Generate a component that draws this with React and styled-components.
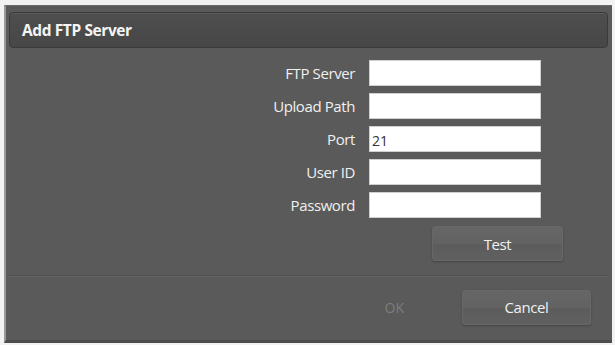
import React from "react"
import styled, { createGlobalStyle } from "styled-components"

const GlobalStyle = createGlobalStyle`
  html, body {
    margin: 0;
    padding: 0;
    background: #f2f2f2;
    font-family: "Open Sans", "Liberation Sans", sans-serif;
  }
`

const fields = [
  { key: "server", label: "FTP Server", value: "" },
  { key: "path", label: "Upload Path", value: "" },
  { key: "port", label: "Port", value: "21" },
  { key: "user", label: "User ID", value: "" },
  { key: "password", label: "Password", value: "" },
]

const App = () => {
  return (
    <>
      <GlobalStyle />
      <Page>
        <Dialog>
          <TitleBar>Add FTP Server</TitleBar>
          <Form>
            {fields.map(field => (
              <Row key={field.key}>
                <Label>{field.label}</Label>
                <Input
                  type={field.key === "password" ? "password" : "text"}
                  defaultValue={field.value}
                />
              </Row>
            ))}
            <TestRow>
              <Button $width={131}>Test</Button>
            </TestRow>
          </Form>
          <Footer>
            <OkText>OK</OkText>
            <Button $width={129}>Cancel</Button>
          </Footer>
        </Dialog>
      </Page>
    </>
  )
}

const Page = styled.div`
  width: 615px;
  height: 345px;
  padding: 5px 3px 2px 4px;
  box-sizing: border-box;
`

const Dialog = styled.div`
  height: 100%;
  background: #5a5a5a;
  border-left: 2px solid #9a9a9a;
  border-top: 1px solid #6a6a6a;
  border-bottom: 3px solid #4c4c4c;
  box-sizing: border-box;
  padding: 6px 4px 0 3px;
  display: flex;
  flex-direction: column;
`

const TitleBar = styled.div`
  height: 36px;
  box-sizing: border-box;
  border: 1px solid #3a3a3a;
  border-radius: 4px;
  background: linear-gradient(#4e4e4e, #474747);
  box-shadow: inset 0 1px 0 #5c5c5c;
  color: #f4f4f4;
  font-weight: 700;
  font-size: 15.5px;
  letter-spacing: -0.4px;
  display: flex;
  align-items: center;
  padding-left: 12px;
`

const Form = styled.div`
  display: flex;
  flex-direction: column;
  gap: 7px;
  padding-top: 12px;
  padding-bottom: 14px;
  border-bottom: 1px solid #4f4f4f;
  box-shadow: 0 1px 0 #656565;
`

const Row = styled.div`
  display: flex;
  align-items: center;
  padding-left: 226px;
`

const Label = styled.div`
  width: 120px;
  text-align: right;
  color: #f0f0f0;
  font-size: 15px;
  letter-spacing: -0.4px;
  margin-right: 14px;
`

const Input = styled.input`
  width: 172px;
  height: 26px;
  box-sizing: border-box;
  border: 1px solid #d0d0d0;
  background: #ffffff;
  font-family: "Open Sans", "Liberation Sans", sans-serif;
  font-size: 14px;
  color: #333;
  padding: 2px 2px 0;
  outline: none;
`

const TestRow = styled.div`
  display: flex;
  padding-left: 423px;
  margin-top: 1px;
`

const Button = styled.button`
  width: ${p => p.$width}px;
  height: 35px;
  border: 1px solid #676767;
  border-radius: 3px;
  background: linear-gradient(#666666 0%, #626262 50%, #5c5c5c 52%, #606060 100%);
  color: #f0f0f0;
  font-family: "Open Sans", "Liberation Sans", sans-serif;
  font-size: 15px;
  letter-spacing: -0.4px;
  box-shadow: 0 1px 2px rgba(0, 0, 0, 0.25);
`

const Footer = styled.div`
  flex: 1;
  display: flex;
  align-items: center;
  justify-content: flex-end;
  padding-right: 17px;
  padding-bottom: 2px;
`

const OkText = styled.div`
  color: #7d7d7d;
  font-size: 14px;
  margin-right: 58px;
`

export default App
